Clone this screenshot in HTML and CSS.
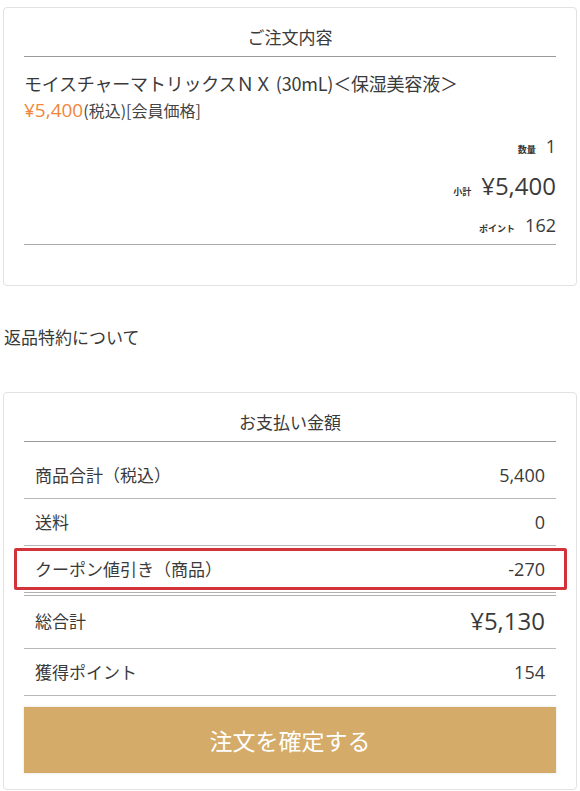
FILE: index.html
```html
<!DOCTYPE html>
<html lang="ja">
<head>
<meta charset="utf-8">
<title>ご注文内容</title>
<link rel="stylesheet" href="styles.css">
</head>
<body>
<section class="card order">
  <h2 class="card-title">ご注文内容</h2>
  <div class="item">
    <p class="item-name">モイスチャーマトリックスＮＸ (30mL)＜保湿美容液＞</p>
    <p class="item-price"><span class="price num">¥5,400</span><span class="tax">(税込)[会員価格]</span></p>
    <div class="meta qty"><span class="meta-label">数量</span><span class="meta-value num">1</span></div>
    <div class="meta sub"><span class="meta-label">小計</span><span class="meta-value big num">¥5,400</span></div>
    <div class="meta pts"><span class="meta-label">ポイント</span><span class="meta-value num">162</span></div>
  </div>
</section>

<p class="return-link">返品特約について</p>

<section class="card pay">
  <h2 class="card-title">お支払い金額</h2>
  <div class="rows">
    <div class="row first"><span>商品合計（税込）</span><span class="num">5,400</span></div>
    <div class="row"><span>送料</span><span class="num">0</span></div>
    <div class="row coupon"><span>クーポン値引き（商品）</span><span class="num">-270</span></div>
    <div class="row total"><span>総合計</span><span class="num total-value">¥5,130</span></div>
    <div class="row"><span>獲得ポイント</span><span class="num">154</span></div>
  </div>
  <button class="confirm" type="button">注文を確定する</button>
</section>
</body>
</html>
```

FILE: styles.css
```css
* { box-sizing: border-box; }
html, body { margin: 0; padding: 0; background: #fff; }
body {
  padding: 7px 3px 0;
  font-family: "Noto Sans CJK JP", "Noto Sans", sans-serif;
  color: #3a3a3a;
}
p { margin: 0; }
.num { font-family: "Open Sans", "Noto Sans CJK JP", sans-serif; }
.card {
  border: 1px solid #e2e2e2;
  border-radius: 4px;
  padding: 0 20px;
  background: #fff;
}
.card-title {
  margin: 0;
  padding: 17px 0 7px;
  line-height: 24px;
  font-size: 17px;
  font-weight: 400;
  text-align: center;
  color: #3a3a3a;
  border-bottom: 1px solid #9a9a9a;
}
.order { padding-bottom: 40px; }
.item { border-bottom: 1px solid #aaa; padding-bottom: 6px; }
.item-name {
  margin-top: 13px;
  font-size: 18px;
  line-height: 26px;
  letter-spacing: -0.2px;
}
.item-price { margin-top: 1px; line-height: 26px; }
.price { color: #f0873a; font-size: 19px; }
.tax { font-size: 16px; color: #444; }
.meta {
  display: flex;
  justify-content: flex-end;
  align-items: baseline;
  gap: 10px;
}
.meta-label { font-size: 9px; font-weight: 700; color: #333; }
.meta-value { font-size: 18px; line-height: 26px; }
.meta-value.big { font-size: 24px; line-height: 34px; }
.qty { margin-top: 10px; }
.sub { margin-top: 10px; }
.pts { margin-top: 9px; }
.return-link {
  margin: 39px 0 43px;
  padding-left: 1px;
  font-size: 17px;
  line-height: 24px;
}
.pay { padding-bottom: 16px; }
.rows { display: flex; flex-direction: column; }
.row {
  position: relative;
  display: flex;
  justify-content: space-between;
  align-items: center;
  padding: 11px 11px;
  font-size: 17px;
  line-height: 24px;
  border-bottom: 1px solid #b8b8b8;
}
.row .num { font-size: 18px; }
.row.first { margin-top: 10px; }
.row.coupon { border-bottom: 4px double #b0b0b0; }
.row.coupon::after {
  content: "";
  position: absolute;
  left: -10px;
  right: -11px;
  top: 2px;
  bottom: 2px;
  border: 3px solid #d2323a;
  border-radius: 2px;
}
.row.total { line-height: 30px; padding-top: 10px; padding-bottom: 12px; }
.row .total-value { font-size: 24px; }
.confirm {
  display: block;
  width: 100%;
  margin-top: 11px;
  height: 66px;
  border: 0;
  border-radius: 0;
  background: #d4ab68;
  color: #fff;
  font-family: inherit;
  font-size: 23px;
  box-shadow: 0 0 2px rgba(0,0,0,0.15);
}
```
